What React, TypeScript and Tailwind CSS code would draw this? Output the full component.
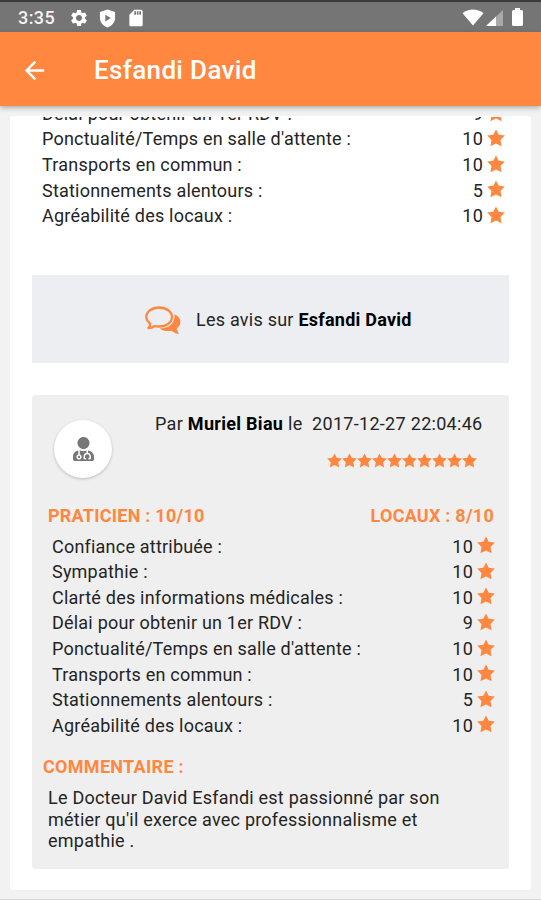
import { FaUserMd } from "react-icons/fa";
import { MdArrowBack, MdSettings, MdSdCard } from "react-icons/md";

type Rating = { label: string; value: number };

const ratings: Rating[] = [
  { label: "Confiance attribuée :", value: 10 },
  { label: "Sympathie :", value: 10 },
  { label: "Clarté des informations médicales :", value: 10 },
  { label: "Délai pour obtenir un 1er RDV :", value: 9 },
  { label: "Ponctualité/Temps en salle d'attente :", value: 10 },
  { label: "Transports en commun :", value: 10 },
  { label: "Stationnements alentours :", value: 5 },
  { label: "Agréabilité des locaux :", value: 10 },
];

function Star({ className }: { className: string }) {
  return (
    <svg viewBox="0 0 20 19" className={className} fill="#ff873f">
      <path d="M10 0 13 5.8 19.8 6.7 15 11.7 16.2 18.7 10 15.6 3.8 18.7 5 11.7 0.2 6.7 7 5.8Z" />
    </svg>
  );
}

function RatingRows({ items }: { items: Rating[] }) {
  return (
    <>
      {items.map((r) => (
        <div key={r.label} className="flex h-[25.6px] items-center justify-between tracking-[0.21px]">
          <span>{r.label}</span>
          <span className="flex items-center gap-1">
            {r.value}
            <Star className="mb-0.5 h-[18px] w-[18px]" />
          </span>
        </div>
      ))}
    </>
  );
}

function StatusBar() {
  return (
    <div className="flex h-8 items-center border-t-2 border-[#3b3b3b] bg-[#757575] pt-0.5 pr-[18px] pl-[18px] text-white">
      <span className="w-[50px] text-[18px] font-medium tracking-[0.4px] text-[#f4f4f4]">3:35</span>
      <MdSettings className="ml-[1px] h-5 w-5" />
      <svg viewBox="0 0 18 20" className="ml-[10px] h-[19px] w-[17px]" fill="#fff">
        <path fillRule="evenodd" d="M9 0.5 17 3.2V9.5C17 14.2 13.7 18 9 19.5 4.3 18 1 14.2 1 9.5V3.2ZM6.7 5.9V13.1L12.5 9.5Z" />
      </svg>
      <MdSdCard className="ml-[10px] h-5 w-5" />
      <div className="flex-1" />
      <svg viewBox="0 0 22 17" className="mb-0.5 h-[17px] w-[22px]" fill="#fff">
        <path d="M0.5 4.2C6.5-.7 15.5-.7 21.5 4.2L11 16.5Z" />
      </svg>
      <svg viewBox="0 0 17 16" className="ml-[2px] h-4 w-[17px]">
        <path d="M17 0V16H0Z" fill="#a9a9a9" />
        <path d="M10 6.6V16H0Z" fill="#fff" />
      </svg>
      <svg viewBox="0 0 11 18" className="mb-0.5 ml-[9px] h-[18px] w-[11px]" fill="#fff">
        <path d="M3 0H8V2H9.5Q11 2 11 3.5V16.5Q11 18 9.5 18H1.5Q0 18 0 16.5V3.5Q0 2 1.5 2H3Z" />
      </svg>
    </div>
  );
}

function Bubbles() {
  return (
    <svg viewBox="0 0 36 29" className="mt-0.5 h-[29px] w-9">
      <path d="M29.5 8.2C37.3 11.8 36.6 19.2 31.8 22.2 31.9 24.2 32.7 25.8 34.2 28 31.2 27.8 28.5 26.4 26.7 24.7 22.5 25.4 17.5 24.8 14.5 22.4 23.5 22.3 30.5 17.8 29.5 8.2Z" fill="#ff873f" />
      <path d="M14 1.5C21.3 1.5 27 5.7 27 11.1S21.3 20.5 14 20.5C12.4 20.5 11 20.3 9.7 20 7.8 21.4 5.5 22.1 3.4 22.1 4.6 20.8 5.2 19.2 5.2 17.6 2.7 15.9 1.3 13.6 1.3 11.1 1.3 5.7 7 1.5 14 1.5Z" fill="#eceef2" stroke="#ff873f" strokeWidth="2.3" strokeLinejoin="round" />
    </svg>
  );
}

export default function App() {
  return (
    <div className="flex h-[900px] w-[541px] flex-col overflow-hidden border-b border-[#dadada] bg-[#f2f2f2] font-[Roboto,sans-serif] text-[18px] leading-[21.5px] tracking-[0.3px] text-[#242424]">
      <StatusBar />
      <header className="z-10 flex h-[74px] shrink-0 items-center bg-[#ff873f] pt-0.5 pl-[20px] text-white shadow-[0_2px_5px_rgba(0,0,0,0.28)]">
        <MdArrowBack className="h-[29px] w-[29px]" />
        <h1 className="ml-[45px] text-[26px] font-medium leading-8 tracking-[0.33px]">Esfandi David</h1>
      </header>

      <main className="mx-[10px] mt-[10px] h-[774px] shrink-0 overflow-hidden rounded-[3px] bg-white">
        <div className="mt-px h-[158px] overflow-hidden pr-[26px] pl-8">
          <div className="-mt-[16.3px]">
            <RatingRows items={ratings.slice(3)} />
          </div>
        </div>

        <section className="mr-[22px] ml-[22px] flex h-[88px] items-center bg-[#eceef2] pl-[113px]">
          <Bubbles />
          <p className="mt-0.5 ml-[15px] tracking-[0.24px]">
            Les avis sur <b className="font-bold text-black">Esfandi David</b>
          </p>
        </section>

        <article className="mt-8 mr-[22px] ml-[22px] h-[474px] rounded-[3px] bg-[#efefef]">
          <div className="flex h-[109px]">
            <div className="mt-[24.5px] ml-[22px] flex h-[58px] w-[58px] items-center justify-center rounded-full bg-white shadow-[0_1px_3px_rgba(0,0,0,0.22)]">
              <FaUserMd className="h-6 w-[21px] text-[#777]" />
            </div>
            <div className="ml-[43px] flex-1 pt-[18px]">
              <p className="whitespace-pre">
                Par <b className="font-bold text-black">Muriel Biau</b> le  2017-12-27 22:04:46
              </p>
              <div className="mt-[18px] ml-[172px] flex">
                {Array.from({ length: 10 }, (_, i) => (
                  <Star key={i} className="h-[15px] w-[15px]" />
                ))}
              </div>
            </div>
          </div>
          <div className="flex justify-between pt-px pr-[15px] pl-4 font-bold tracking-[0.24px] text-[#ff873f]">
            <span>PRATICIEN : 10/10</span>
            <span>LOCAUX : 8/10</span>
          </div>
          <div className="mt-[7px] pr-[14px] pl-5">
            <RatingRows items={ratings} />
          </div>
          <h2 className="mt-[18px] ml-[11px] font-bold text-[#ff873f]">COMMENTAIRE :</h2>
          <p className="mt-[9.5px] ml-4 w-[410px] tracking-[0.23px]">
            Le Docteur David Esfandi est passionné par son métier qu'il exerce avec professionnalisme et empathie .
          </p>
        </article>
      </main>
    </div>
  );
}
